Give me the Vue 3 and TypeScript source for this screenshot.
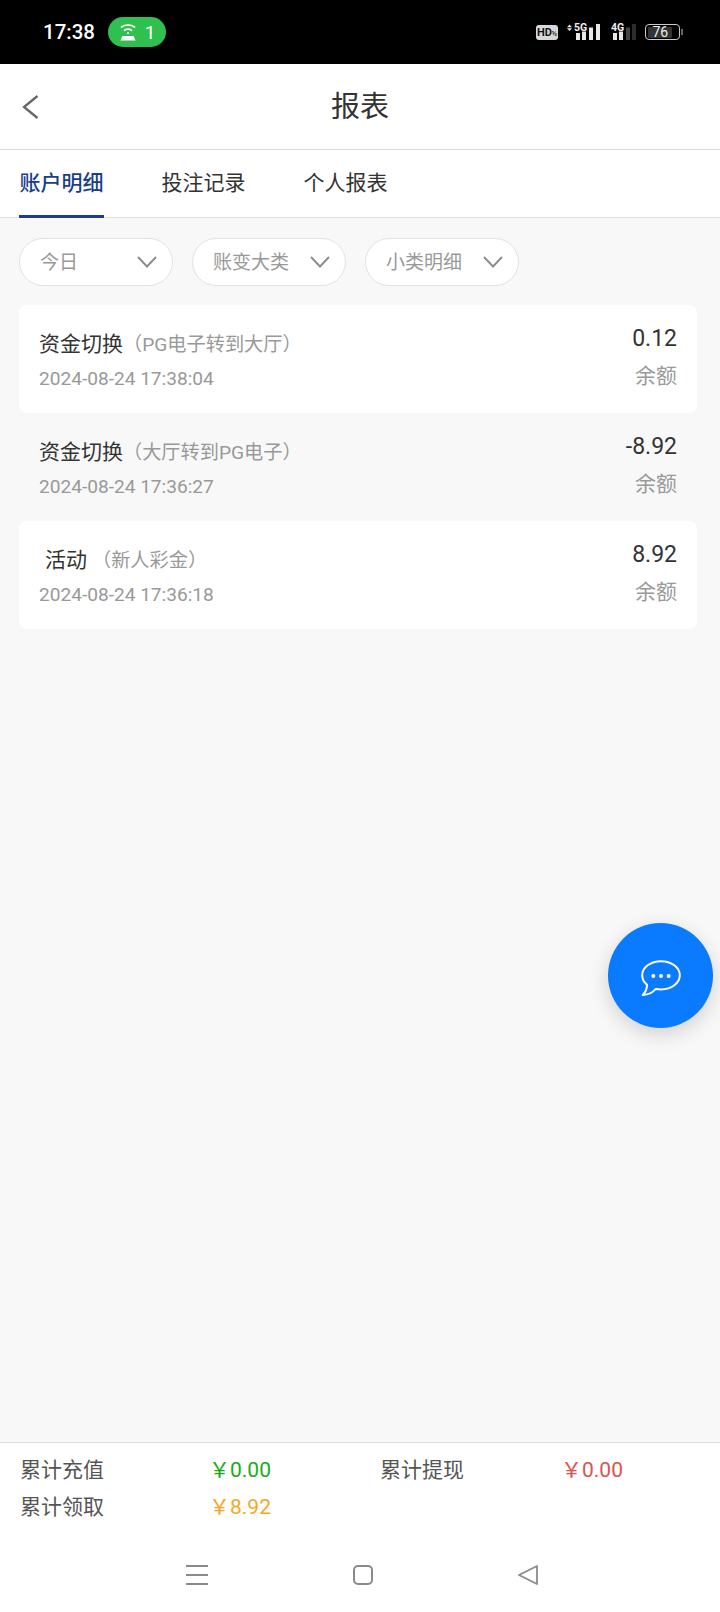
<script setup lang="ts">
type Record = {
  id: number
  title: string
  note: string
  time: string
  amount: string
  white: boolean
  indent?: boolean
}

const filters = ["今日", "账变大类", "小类明细"]
const tabs = ["账户明细", "投注记录", "个人报表"]

const records: Record[] = [
  { id: 1, title: "资金切换", note: "（PG电子转到大厅）", time: "2024-08-24 17:38:04", amount: "0.12", white: true },
  { id: 2, title: "资金切换", note: "（大厅转到PG电子）", time: "2024-08-24 17:36:27", amount: "-8.92", white: false },
  { id: 3, title: "活动", note: "（新人彩金）", time: "2024-08-24 17:36:18", amount: "8.92", white: true, indent: true },
]
</script>

<template>
  <div class="page">
    <div class="status">
      <span class="clock">17:38</span>
      <span class="hotspot">
        <svg width="18" height="18" viewBox="0 0 18 18" fill="none" stroke="#fff" stroke-width="1.7" stroke-linecap="round">
          <path d="M2.5 4C6 1.3 12 1.3 15.5 4" />
          <path d="M5.5 7.4C7.6 6 10.4 6 12.5 7.4" />
          <circle cx="9" cy="10" r="1" fill="#fff" stroke="none" />
          <path d="M1.5 17.5 L3.4 13 H14.6 L16.5 17.5 Z" fill="#fff" stroke="none" />
        </svg>
        <span>1</span>
      </span>
      <div class="status-right">
        <span class="hd">HD<small>½</small></span>
        <span class="signal">
          <svg width="34" height="16" viewBox="0 0 34 16" fill="#e8e8e8">
            <path d="M1 3.2 L3.5 0.5 L6 3.2 Z M1 4.3 H6 L3.5 7 Z" />
            <rect x="10" y="9" width="4" height="7" />
            <rect x="16" y="7.5" width="4" height="8.5" />
            <rect x="23" y="3.5" width="4" height="12.5" />
            <rect x="30" y="0" width="4" height="16" />
          </svg>
          <span class="sig-label first">5G</span>
        </span>
        <span class="signal second">
          <svg width="25" height="16" viewBox="0 0 25 16" fill="#e8e8e8">
            <rect x="2" y="9" width="4" height="7" />
            <rect x="8" y="7.5" width="4" height="8.5" />
            <rect x="15" y="3.5" width="4" height="12.5" fill="#444" />
            <rect x="21" y="0" width="4" height="16" fill="#2c2c2c" />
          </svg>
          <span class="sig-label">4G</span>
        </span>
        <span class="battery"><span class="level">76</span></span>
        <span class="cap"></span>
      </div>
    </div>

    <header class="topbar">
      <svg class="back" width="17" height="26" viewBox="0 0 17 26" fill="none" stroke="#666" stroke-width="2.3">
        <path d="M15.5 2 L2 13 L15.5 24" />
      </svg>
      <h1>报表</h1>
    </header>

    <nav class="tabs">
      <span v-for="(tab, i) in tabs" :key="tab" class="tab" :class="{ active: i === 0 }">{{ tab }}</span>
    </nav>

    <main class="content">
      <div class="filters">
        <div v-for="f in filters" :key="f" class="pill">
          <span class="pill-text">{{ f }}</span>
          <svg width="20" height="12" viewBox="0 0 20 12" fill="none" stroke="#8c8c8c" stroke-width="1.9">
            <path d="M1 1 L10 10.5 L19 1" />
          </svg>
        </div>
      </div>

      <div class="list">
        <article v-for="r in records" :key="r.id" class="row" :class="{ white: r.white }">
          <div class="left">
            <p class="title" :class="{ indent: r.indent }">{{ r.title }}<span>{{ r.note }}</span></p>
            <p class="time">{{ r.time }}</p>
          </div>
          <div class="right">
            <p class="amount">{{ r.amount }}</p>
            <p class="balance">余额</p>
          </div>
        </article>
      </div>

      <button class="chat">
        <svg width="40" height="36" viewBox="0 0 40 36" fill="none" stroke="#fff" stroke-width="2" stroke-linejoin="round">
          <path d="M20 1.2C9.5 1.2 1.2 7.5 1.2 15.2C1.2 19 3.2 22.4 6 24.8C6 28.6 4.4 32.4 1.8 35C7 34.6 11.8 32.6 14.6 29C16.4 29.2 18.2 29.4 20 29.4C30.5 29.4 38.8 23 38.8 15.2C38.8 7.5 30.5 1.2 20 1.2Z" />
          <circle cx="12.3" cy="16" r="2" fill="#fff" stroke="none" />
          <circle cx="20" cy="16" r="2" fill="#fff" stroke="none" />
          <circle cx="27.7" cy="16" r="2" fill="#fff" stroke="none" />
        </svg>
      </button>
    </main>

    <footer class="summary">
      <div class="sum-row">
        <span class="label">累计充值</span>
        <span class="val green">￥0.00</span>
        <span class="label">累计提现</span>
        <span class="val red">￥0.00</span>
      </div>
      <div class="sum-row">
        <span class="label">累计领取</span>
        <span class="val orange">￥8.92</span>
      </div>
    </footer>

    <div class="navbar">
      <svg width="22" height="20" viewBox="0 0 22 20" fill="none" stroke="#8a8a8a" stroke-width="2">
        <path d="M0 1 H22 M0 10 H22 M0 19 H22" />
      </svg>
      <svg width="20" height="20" viewBox="0 0 20 20" fill="none" stroke="#8a8a8a" stroke-width="2">
        <rect x="1" y="1" width="18" height="18" rx="4" />
      </svg>
      <svg width="20" height="20" viewBox="0 0 20 20" fill="none" stroke="#8a8a8a" stroke-width="1.8" stroke-linejoin="round">
        <path d="M19 1 V19 L1 10 Z" />
      </svg>
    </div>
  </div>
</template>

<style>
html,
body {
  margin: 0;
  padding: 0;
}
</style>

<style scoped>
.page {
  width: 720px;
  height: 1612px;
  display: flex;
  flex-direction: column;
  background: #f8f8f8;
  font-family: Roboto, "Noto Sans CJK SC", sans-serif;
  overflow: hidden;
}

p,
h1 {
  margin: 0;
}

.status {
  height: 64px;
  flex: none;
  background: #000;
  color: #fff;
  display: flex;
  align-items: center;
  padding: 0 37px 0 43px;
  box-sizing: border-box;
}

.clock {
  font-size: 20.5px;
  font-weight: 500;
}

.hotspot {
  margin-left: 13px;
  width: 58px;
  height: 30px;
  border-radius: 15px;
  background: #30c050;
  display: flex;
  align-items: center;
  justify-content: center;
  gap: 8px;
  font-size: 19px;
}

.status-right {
  margin-left: auto;
  display: flex;
  align-items: center;
  height: 30px;
}

.hd {
  background: #d8d8d8;
  color: #111;
  font-size: 11px;
  font-weight: 700;
  line-height: 15px;
  height: 15px;
  width: 22px;
  border-radius: 3px;
  display: block;
  white-space: nowrap;
  text-align: center;
}

.hd small {
  font-size: 7px;
}

.signal {
  position: relative;
  display: block;
  width: 34px;
  height: 16px;
  margin-left: 8px;
  margin-top: -1px;
}

.signal.second {
  width: 25px;
  margin-left: 11px;
}

.signal svg {
  display: block;
}

.sig-label {
  position: absolute;
  left: 0;
  top: -1px;
  font-size: 10.5px;
  font-weight: 700;
  line-height: 10px;
  color: #eee;
  white-space: nowrap;
}

.sig-label.first {
  left: 8px;
}

.battery {
  margin-left: 9px;
  width: 35px;
  height: 16px;
  box-sizing: border-box;
  border: 1.5px solid #ccc;
  border-radius: 4px;
  padding: 1.5px;
  display: flex;
}

.level {
  width: 24px;
  height: 100%;
  background: #333;
  border-radius: 1px;
  font-size: 14px;
  line-height: 10px;
  padding-left: 5px;
  box-sizing: border-box;
  color: #eee;
  white-space: nowrap;
}

.cap {
  width: 2px;
  height: 6px;
  margin-left: 1px;
  background: #666;
}

.topbar {
  height: 86px;
  flex: none;
  background: #fff;
  border-bottom: 1px solid #dcdcdc;
  box-sizing: border-box;
  padding-bottom: 6px;
  display: flex;
  align-items: center;
  justify-content: center;
  position: relative;
}

.back {
  position: absolute;
  left: 22px;
  top: 30px;
}

.topbar h1 {
  font-size: 29px;
  font-weight: 400;
  color: #333;
}

.tabs {
  height: 68px;
  flex: none;
  background: #fff;
  border-bottom: 1px solid #e0e0e0;
  box-sizing: border-box;
  display: flex;
  padding-left: 19px;
  gap: 57px;
}

.tab {
  height: 68px;
  box-sizing: border-box;
  font-size: 21px;
  line-height: 66px;
  color: #333;
  width: 85px;
  text-align: center;
}

.tab.active {
  color: #1a3f8a;
  font-weight: 500;
  border-bottom: 3px solid #1a3f8a;
}

.content {
  flex: 1;
  position: relative;
  padding: 20px 23px 0 19px;
}

.filters {
  display: flex;
  gap: 19px;
}

.pill {
  width: 154px;
  height: 48px;
  box-sizing: border-box;
  border: 1px solid #e2e2e2;
  border-radius: 24px;
  background: #fff;
  display: flex;
  align-items: center;
  justify-content: space-between;
  padding: 0 15px 0 20px;
  font-size: 19px;
  color: #999;
}

.pill-text {
  margin-bottom: 4px;
}

.list {
  margin-top: 19px;
}

.row {
  height: 108px;
  box-sizing: border-box;
  border-radius: 8px;
  padding: 0 20px;
  display: flex;
  justify-content: space-between;
  align-items: flex-start;
}

.row.white {
  background: #fff;
}

.left {
  padding-top: 24px;
}

.right {
  padding-top: 19px;
  text-align: right;
}

.title {
  font-size: 21px;
  line-height: 30px;
  color: #333;
}

.title.indent {
  padding-left: 6px;
}

.title span {
  font-size: 19.2px;
  color: #999;
}

.title.indent span {
  margin-left: 5px;
}

.time {
  margin-top: 7px;
  font-size: 19.1px;
  line-height: 24px;
  color: #999;
}

.amount {
  font-size: 23px;
  line-height: 30px;
  color: #333;
}

.balance {
  margin-top: 8px;
  font-size: 21px;
  line-height: 28px;
  color: #999;
}

.chat {
  position: absolute;
  left: 608px;
  top: 705px;
  width: 105px;
  height: 105px;
  border: none;
  border-radius: 50%;
  background: #0a7aff;
  box-shadow: 0 6px 20px rgba(0, 0, 0, 0.16);
  display: flex;
  align-items: center;
  justify-content: center;
  padding: 4px 0 0;
}

.summary {
  flex: none;
  height: 108px;
  background: #fff;
  border-top: 1px solid #ddd;
  box-sizing: border-box;
  padding: 6px 20px 0;
}

.sum-row {
  height: 37px;
  display: grid;
  grid-template-columns: 189px 171px 181px 1fr;
  align-items: center;
  font-size: 21px;
}

.label {
  color: #555;
}

.green {
  color: #18ad18;
}

.red {
  color: #d9534f;
}

.orange {
  color: #f5a623;
}

.navbar {
  flex: none;
  height: 62px;
  background: #fff;
  display: flex;
  justify-content: center;
  gap: 145px;
  box-sizing: border-box;
  padding: 15px 0 0 4px;
}
</style>
